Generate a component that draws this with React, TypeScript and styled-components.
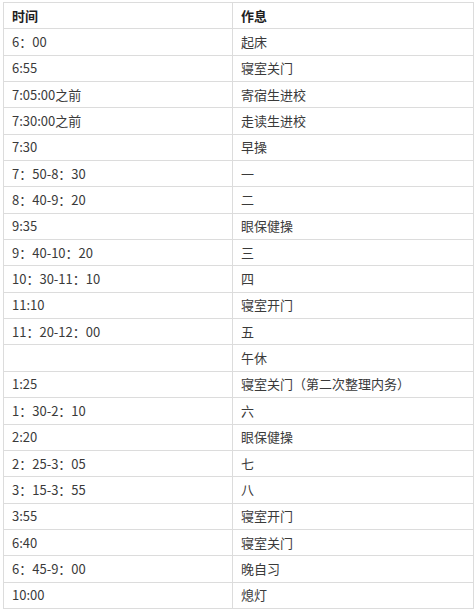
import { createGlobalStyle, styled } from "styled-components";

const GlobalStyle = createGlobalStyle`
  html, body {
    margin: 0;
    padding: 0;
    background: #ffffff;
  }
`;

const Page = styled.div`
  padding: 2px 0 0 3px;
  width: 471px;
  font-family: "Noto Sans CJK SC", "Noto Sans", sans-serif;
`;

const Table = styled.table`
  width: 471px;
  border-collapse: collapse;
  table-layout: fixed;
  font-size: 13px;
  color: #3a3a3a;
`;

const Cell = styled.td<{ $head?: boolean }>`
  border: 1px solid #dcdcdc;
  height: 25.35px;
  padding: 0 8px;
  line-height: 18px;
  vertical-align: middle;
  font-weight: ${(p) => (p.$head ? 700 : 400)};
  color: ${(p) => (p.$head ? "#1f1f1f" : "#3a3a3a")};
  white-space: nowrap;
`;

const rows: [string, string][] = [
  ["6：00", "起床"],
  ["6:55", "寝室关门"],
  ["7:05:00之前", "寄宿生进校"],
  ["7:30:00之前", "走读生进校"],
  ["7:30", "早操"],
  ["7：50-8：30", "一"],
  ["8：40-9：20", "二"],
  ["9:35", "眼保健操"],
  ["9：40-10：20", "三"],
  ["10：30-11：10", "四"],
  ["11:10", "寝室开门"],
  ["11：20-12：00", "五"],
  ["", "午休"],
  ["1:25", "寝室关门（第二次整理内务）"],
  ["1：30-2：10", "六"],
  ["2:20", "眼保健操"],
  ["2：25-3：05", "七"],
  ["3：15-3：55", "八"],
  ["3:55", "寝室开门"],
  ["6:40", "寝室关门"],
  ["6：45-9：00", "晚自习"],
  ["10:00", "熄灯"],
];

export default function App() {
  return (
    <>
      <GlobalStyle />
      <Page>
        <Table>
          <colgroup>
            <col style={{ width: 229 }} />
            <col />
          </colgroup>
          <tbody>
            <tr>
              <Cell $head>时间</Cell>
              <Cell $head>作息</Cell>
            </tr>
            {rows.map(([time, what], i) => (
              <tr key={i}>
                <Cell>{time}</Cell>
                <Cell>{what}</Cell>
              </tr>
            ))}
          </tbody>
        </Table>
      </Page>
    </>
  );
}
